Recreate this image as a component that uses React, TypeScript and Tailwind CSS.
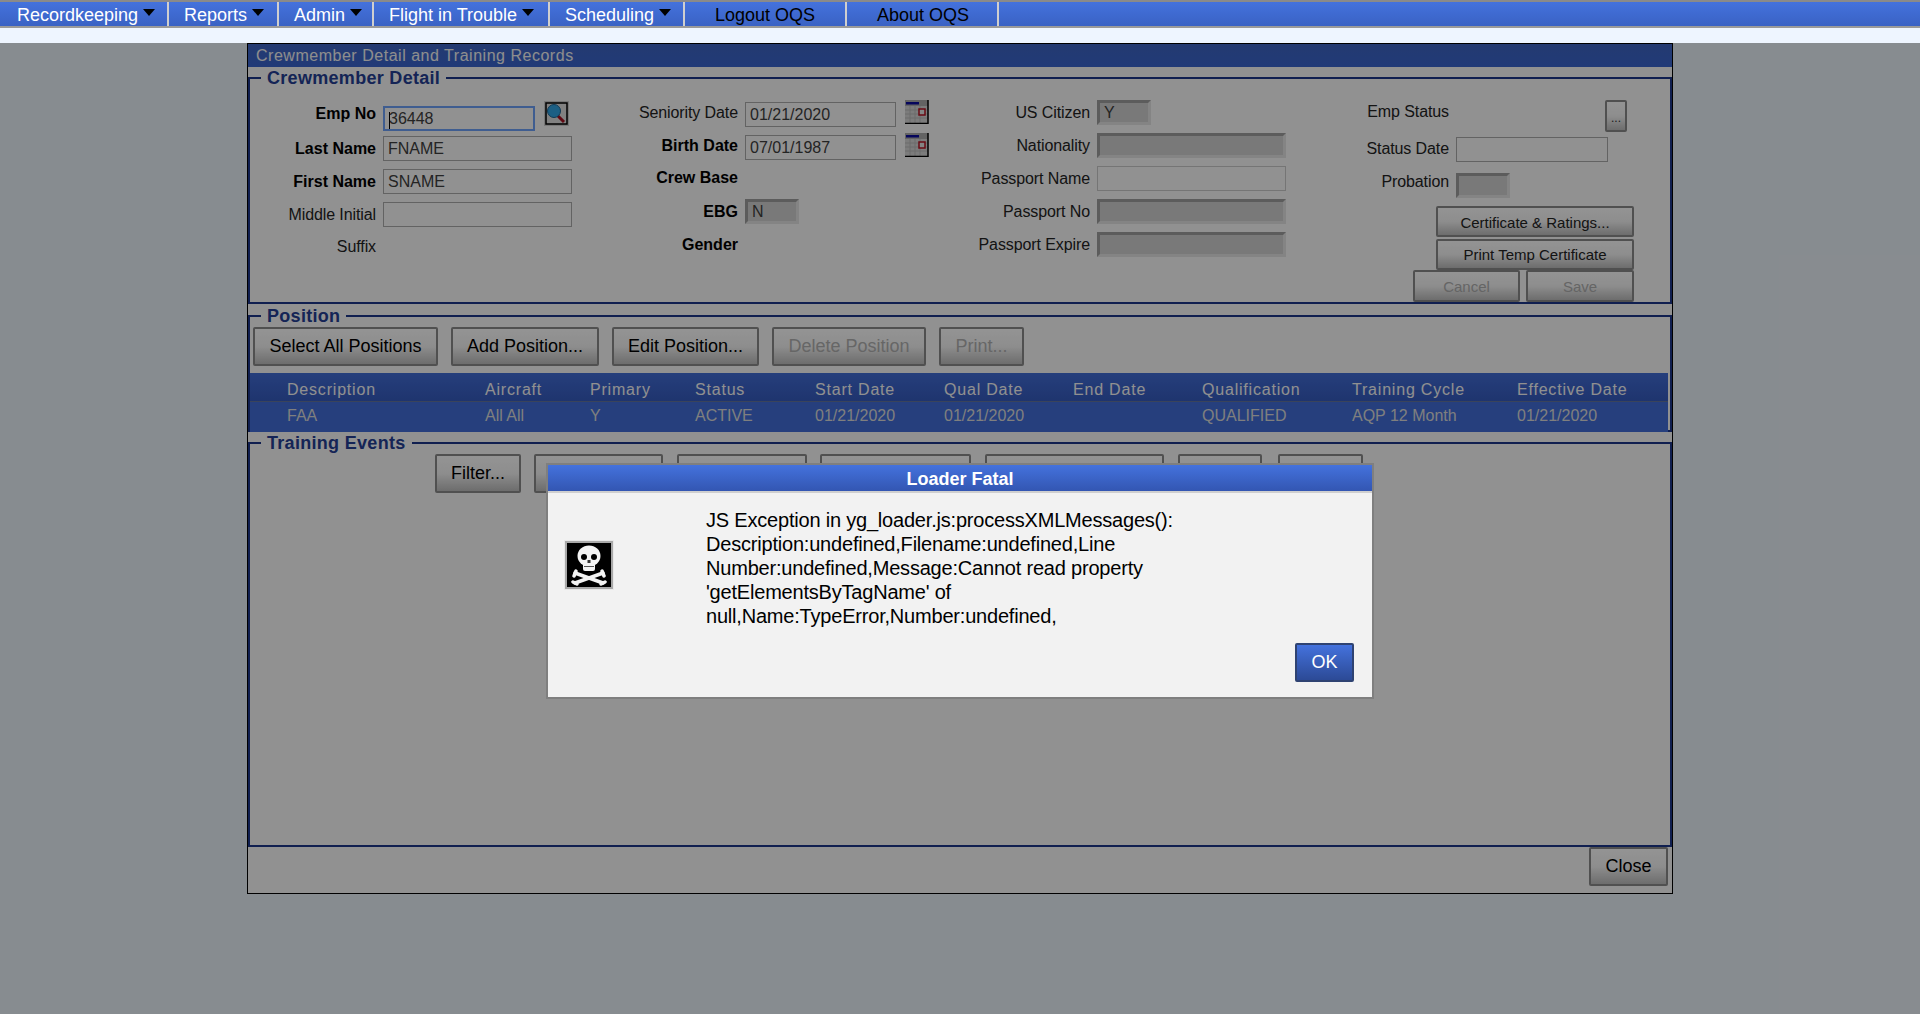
import React from 'react';

const navItems = [
  { label: 'Recordkeeping', width: 'w-[167px] pl-[15px] text-white', caret: true },
  { label: 'Reports', width: 'w-[110px] pl-[15px] text-white', caret: true },
  { label: 'Admin', width: 'w-[95px] pl-[15px] text-white', caret: true },
  { label: 'Flight in Trouble', width: 'w-[176px] pl-[15px] text-white', caret: true },
  { label: 'Scheduling', width: 'w-[135px] pl-[15px] text-white', caret: true },
  { label: 'Logout OQS', width: 'w-[162px] pl-[30px] text-black', caret: false },
  { label: 'About OQS', width: 'w-[152px] pl-[30px] text-black', caret: false },
];

const columns = ['Description', 'Aircraft', 'Primary', 'Status', 'Start Date', 'Qual Date', 'End Date', 'Qualification', 'Training Cycle', 'Effective Date'];
const row = ['FAA', 'All All', 'Y', 'ACTIVE', '01/21/2020', '01/21/2020', '', 'QUALIFIED', 'AQP 12 Month', '01/21/2020'];
const gridCols = 'grid grid-cols-[198px_105px_105px_120px_129px_129px_129px_150px_165px_1fr] pl-[37px]';

const btnBase = 'shrink-0 rounded-[2px] border-2 border-[#858585] bg-gradient-to-b from-[#f6f6f6] via-[#ececec] to-[#b6b6b6] font-["Liberation_Sans",sans-serif]';

const SearchIcon = () => (
  <svg width="25" height="25" viewBox="0 0 25 25" className="shrink-0">
    <rect x="0" y="0" width="25" height="25" fill="#c8c8c8" />
    <rect x="2" y="2" width="21" height="21" fill="#d8d8d8" stroke="#000" strokeWidth="1.5" />
    <line x1="13" y1="14" x2="20" y2="21" stroke="#a01020" strokeWidth="3" />
    <circle cx="10" cy="10" r="6.5" fill="#2f9fdc" stroke="#1d5f8c" strokeWidth="1" />
  </svg>
);

const CalendarIcon = () => (
  <svg width="25" height="24" viewBox="0 0 25 24" className="ml-[8px] mt-[-5px] shrink-0">
    <rect x="1" y="0" width="23" height="23" fill="#cfcfcf" />
    <rect x="1" y="0" width="23" height="6" fill="#a6a6a6" />
    <rect x="2" y="2" width="13" height="2.500" fill="#0a0a9a" />
    <path d="M1 10h23M1 14h23M1 18h23M6 6v17M11 6v17M16 6v17" stroke="#b4b4b4" strokeWidth="1" />
    <rect x="15" y="9" width="6" height="6" fill="#dcdcdc" stroke="#b01020" strokeWidth="1.500" />
    <path d="M24 0v24M1 23.500h23" stroke="#000" strokeWidth="1.500" />
  </svg>
);

const SkullIcon = () => (
  <svg width="50" height="50" viewBox="0 0 50 50">
    <rect x="0.500" y="0.500" width="49" height="49" fill="#f8f8f8" stroke="#e8e8e8" />
    <rect x="2" y="2" width="46" height="46" fill="#000" stroke="#a8a8a8" strokeWidth="2" />
    <g stroke="#f4f4f4" strokeWidth="3.500" strokeLinecap="round">
      <line x1="11" y1="33" x2="39" y2="43" />
      <line x1="39" y1="33" x2="11" y2="43" />
      <line x1="10" y1="36" x2="12" y2="31" />
      <line x1="40" y1="36" x2="38" y2="31" />
      <line x1="9" y1="42" x2="13" y2="44" />
      <line x1="41" y1="42" x2="37" y2="44" />
    </g>
    <ellipse cx="25" cy="16" rx="11.500" ry="10.500" fill="#f4f4f4" />
    <rect x="19" y="23" width="12" height="8" rx="2" fill="#f4f4f4" />
    <circle cx="20" cy="17" r="3" fill="#000" />
    <circle cx="30" cy="17" r="3" fill="#000" />
    <rect x="23.500" y="20" width="3" height="3" fill="#333" />
    <line x1="20" y1="26.500" x2="30" y2="26.500" stroke="#555" strokeWidth="1" />
  </svg>
);

const inputStyles = {
  plain: 'border border-[#a6a6a6] bg-[#f2f2f2] text-[#3c3c3c]',
  focus: 'border-2 border-[#6a9cf0] bg-[#f2f2f2] text-[#3c3c3c]',
  light: 'border border-[#c4c4c4] bg-[#f2f2f2] text-[#3c3c3c]',
  inset: 'border-[3px] border-t-[#9a9a9a] border-l-[#9a9a9a] border-b-[#dcdcdc] border-r-[#dcdcdc] bg-[#cacaca] text-[#3c3c3c]',
};

interface FieldProps {
  label: string;
  labelWidth: string;
  bold?: boolean;
  value?: string;
  kind?: keyof typeof inputStyles;
  inputWidth?: string;
  top: string;
  labelClass?: string;
  children?: React.ReactNode;
  caret?: boolean;
}

const Field: React.FC<FieldProps> = ({ label, labelWidth, bold, value, kind, inputWidth, top, labelClass, children, caret }) => (
  <div className={`flex h-[25px] items-center ${top}`}>
    <span className={`${labelWidth} shrink-0 text-right text-[16px] leading-[18px] ${bold ? 'font-bold text-black' : 'tracking-[-0.1px] text-[#222]'} ${labelClass || ''}`}>{label}</span>
    {kind && (
      <div className={`relative flex h-[25px] items-center pl-[4px] text-[16px] ${inputWidth} ${inputStyles[kind]} ml-[7px] shrink-0`}>
        {caret && <span className="absolute left-[4px] top-[4px] h-[17px] w-px bg-black" />}
        {value}
      </div>
    )}
    {children}
  </div>
);

const Legend: React.FC<{ title: string }> = ({ title }) => (
  <legend className="ml-[11px] h-[22px] px-[6px] pt-px text-[18px] font-bold leading-[21px] tracking-[0.3px] text-[#233d8f]">{title}</legend>
);

export default function App() {
  return (
    <div className='relative h-[1014px] overflow-hidden bg-[#e2e9f0] font-["Liberation_Sans",sans-serif]'>
      {/* Menu bar */}
      <div className="h-[2px] bg-[#8a8a8a]" />
      <div className="flex h-[24px] bg-gradient-to-b from-[#4472dd] to-[#3a62c4] pl-[2px]">
        {navItems.map(item => (
          <div
            key={item.label}
            className={`${item.width} flex items-center border-r-2 border-[#cfcfcf] pt-[2px] text-[18px]`}
          >
            {item.label}
            {item.caret && <span className="ml-[5px] mt-[-5px] h-0 w-0 border-x-[6px] border-t-[7px] border-x-transparent border-t-black" />}
          </div>
        ))}
      </div>
      <div className="h-[2px] bg-[#9a9a9a]" />
      <div className="h-[15px] bg-[#eef5ff]" />

      {/* Crewmember window */}
      <div className="ml-[247px] h-[851px] w-[1426px] border border-black bg-[#f2f2f2]">
        <div className="flex h-[23px] items-center bg-gradient-to-b from-[#3c62bc] to-[#3862c8] pl-[8px] text-[16px] tracking-[0.52px] text-[#ededed]">
          Crewmember Detail and Training Records
        </div>

        <fieldset className="h-[237px] border-2 border-[#1b3585]">
          <Legend title="Crewmember Detail" />
          <div className="flex">
            <div className="flex w-[322px] flex-col">
              <Field label="Emp No" bold labelWidth="w-[126px]" kind="focus" value="36448" caret inputWidth="w-[152px]" top="mt-[17px]" labelClass="mt-[-10px]">
                <span className="ml-[9px] mt-[-10px]"><SearchIcon /></span>
              </Field>
              <Field label="Last Name" bold labelWidth="w-[126px]" kind="plain" value="FNAME" inputWidth="w-[189px]" top="mt-[5px]" />
              <Field label="First Name" bold labelWidth="w-[126px]" kind="plain" value="SNAME" inputWidth="w-[189px]" top="mt-[8px]" />
              <Field label="Middle Initial" labelWidth="w-[126px]" kind="plain" inputWidth="w-[189px]" top="mt-[8px]" />
              <Field label="Suffix" labelWidth="w-[126px]" top="mt-[7px]" />
            </div>
            <div className="flex w-[357px] flex-col">
              <Field label="Seniority Date" labelWidth="w-[166px]" kind="plain" value="01/21/2020" inputWidth="w-[151px]" top="mt-[13px]" labelClass="mt-[-4px]">
                <CalendarIcon />
              </Field>
              <Field label="Birth Date" bold labelWidth="w-[166px]" kind="plain" value="07/01/1987" inputWidth="w-[151px]" top="mt-[8px]" labelClass="mt-[-4px]">
                <CalendarIcon />
              </Field>
              <Field label="Crew Base" bold labelWidth="w-[166px]" top="mt-[5px]" />
              <Field label="EBG" bold labelWidth="w-[166px]" kind="inset" value="N" inputWidth="w-[54px]" top="mt-[9px]" />
              <Field label="Gender" bold labelWidth="w-[166px]" top="mt-[8px]" />
            </div>
            <div className="flex w-[357px] flex-col">
              <Field label="US Citizen" labelWidth="w-[161px]" kind="inset" value="Y" inputWidth="w-[54px]" top="mt-[11px]" />
              <Field label="Nationality" labelWidth="w-[161px]" kind="inset" inputWidth="w-[189px]" top="mt-[8px]" />
              <Field label="Passport Name" labelWidth="w-[161px]" kind="light" inputWidth="w-[189px]" top="mt-[8px]" />
              <Field label="Passport No" labelWidth="w-[161px]" kind="inset" inputWidth="w-[189px]" top="mt-[8px]" />
              <Field label="Passport Expire" labelWidth="w-[161px]" kind="inset" inputWidth="w-[189px]" top="mt-[8px]" />
            </div>
            <div className="flex flex-col">
              <div className="mt-[11px] flex h-[32px] items-start">
                <span className="mt-[3px] w-[163px] text-right text-[16px] leading-[18px] tracking-[-0.1px] text-[#222]">Emp Status</span>
                <button className={`${btnBase} ml-[156px] h-[32px] w-[22px] text-[12px] leading-[32px] text-[#333]`}>...</button>
              </div>
              <Field label="Status Date" labelWidth="w-[163px]" kind="plain" inputWidth="w-[152px]" top="mt-[5px]" labelClass="mt-[-2px]" />
              <Field label="Probation" labelWidth="w-[163px]" kind="inset" inputWidth="w-[54px]" top="mt-[11px]" labelClass="mt-[-8px]" />
              <div className="ml-[150px] mt-[8px] flex w-[198px] flex-col gap-[2px]">
                <button className={`${btnBase} h-[31px] pt-[3px] text-[15px] text-[#222]`}>Certificate &amp; Ratings...</button>
                <button className={`${btnBase} h-[31px] pt-[1px] text-[15px] text-[#222]`}>Print Temp Certificate</button>
              </div>
              <div className="ml-[127px] flex gap-[6px]">
                <button className={`${btnBase} h-[32px] w-[107px] pt-[2px] text-[15px] text-[#a8a8a8]`}>Cancel</button>
                <button className={`${btnBase} h-[32px] w-[108px] pt-[2px] text-[15px] text-[#a8a8a8]`}>Save</button>
              </div>
            </div>
          </div>
        </fieldset>

        <fieldset className="mt-px h-[127px] border-2 border-[#1b3585]">
          <Legend title="Position" />
          <div className="ml-[3px] flex gap-[13px]">
            <button className={`${btnBase} h-[39px] w-[185px] text-[18px] text-black`}>Select All Positions</button>
            <button className={`${btnBase} h-[39px] w-[148px] text-[18px] text-black`}>Add Position...</button>
            <button className={`${btnBase} h-[39px] w-[147px] text-[18px] text-black`}>Edit Position...</button>
            <button className={`${btnBase} h-[39px] w-[154px] text-[18px] text-[#ababab]`}>Delete Position</button>
            <button className={`${btnBase} h-[39px] w-[85px] text-[18px] text-[#ababab]`}>Print...</button>
          </div>
          <div className="mr-[2px] mt-[7px]">
            <div className={`${gridCols} h-[28px] items-center bg-gradient-to-b from-[#3f69cf] to-[#3458b8] pt-[5px] text-[16px] tracking-[0.8px] text-[#f0f0f0]`}>
              {columns.map(c => <span key={c}>{c}</span>)}
            </div>
            <div className={`${gridCols} h-[31px] items-center border-t border-[#627298] bg-[#406ad0] pb-[2px] text-[16px] text-[#d4d4d4]`}>
              {row.map((c, i) => <span key={i}>{c}</span>)}
            </div>
          </div>
        </fieldset>

        <fieldset className="h-[415px] border-2 border-[#1b3585]">
          <Legend title="Training Events" />
          <div className="ml-[185px] flex">
            <button className={`${btnBase} h-[39px] w-[86px] text-[18px] text-black`}>Filter...</button>
            <button className={`${btnBase} ml-[13px] h-[39px] w-[129px]`} />
            <button className={`${btnBase} ml-[14px] h-[39px] w-[130px]`} />
            <button className={`${btnBase} ml-[13px] h-[39px] w-[151px]`} />
            <button className={`${btnBase} ml-[14px] h-[39px] w-[179px]`} />
            <button className={`${btnBase} ml-[14px] h-[39px] w-[84px]`} />
            <button className={`${btnBase} ml-[16px] h-[39px] w-[85px]`} />
          </div>
        </fieldset>

        <div className="flex justify-end pr-[4px]">
          <button className={`${btnBase} h-[39px] w-[79px] text-[18px] text-black`}>Close</button>
        </div>
      </div>

      {/* Modal mask and dialog */}
      <div className="absolute inset-x-0 bottom-0 top-[43px] bg-black/40">
        <div className="absolute left-[546px] top-[420px] h-[236px] w-[828px] border-2 border-[#7f7f7f] bg-[#f2f2f2]">
          <div className="flex h-[26px] items-center justify-center bg-gradient-to-b from-[#4472dd] to-[#3356b2] pt-[2px] text-[18px] font-bold text-white">
            Loader Fatal
          </div>
          <div className="h-[2px] bg-[#cfcfcf]" />
          <div className="flex">
            <div className="ml-[16px] mt-[47px] shrink-0"><SkullIcon /></div>
            <div className="ml-[92px] mt-[15px] text-[20px] leading-[24px] tracking-[-0.2px] text-black">
              JS Exception in yg_loader.js:processXMLMessages():<br />
              Description:undefined,Filename:undefined,Line<br />
              Number:undefined,Message:Cannot read property<br />
              'getElementsByTagName' of<br />
              null,Name:TypeError,Number:undefined,
            </div>
          </div>
          <button className="absolute right-[18px] top-[178px] h-[39px] w-[59px] rounded-[2px] border-2 border-[#2f4372] bg-gradient-to-b from-[#4472dd] to-[#2c4a96] text-[18px] text-white">
            OK
          </button>
        </div>
      </div>
    </div>
  );
}
